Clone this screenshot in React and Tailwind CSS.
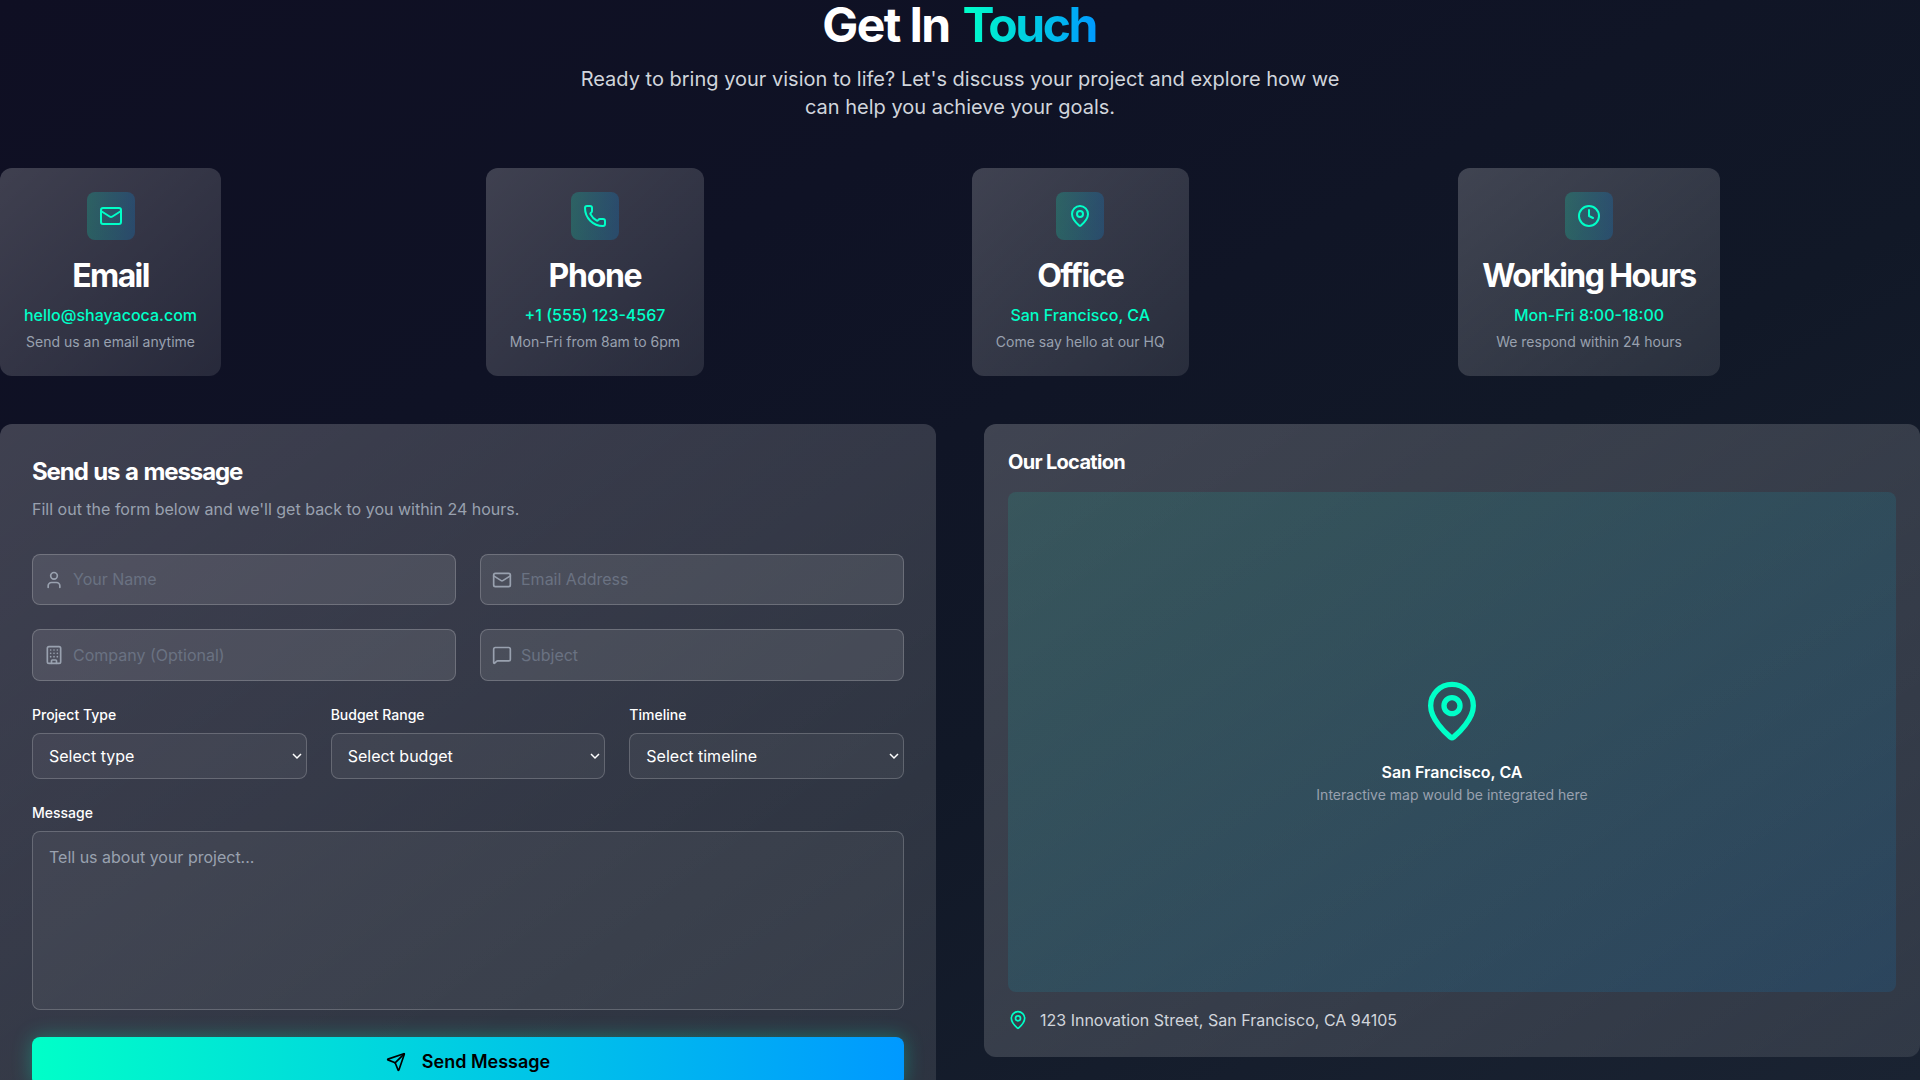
import React from 'react';
import { Mail, Phone, MapPin, Clock, User, Building, MessageSquare, Send } from 'lucide-react';

const contacts = [
  { title: 'Email', value: 'hello@shayacoca.com', note: 'Send us an email anytime', icon: Mail, width: 'w-[221px]', tracking: 'tracking-[-1.6px]' },
  { title: 'Phone', value: '+1 (555) 123-4567', note: 'Mon-Fri from 8am to 6pm', icon: Phone, width: 'w-[218px]', tracking: 'tracking-[-1.3px]' },
  { title: 'Office', value: 'San Francisco, CA', note: 'Come say hello at our HQ', icon: MapPin, width: 'w-[216.5px]', tracking: 'tracking-[-1.6px]' },
  { title: 'Working Hours', value: 'Mon-Fri 8:00-18:00', note: 'We respond within 24 hours', icon: Clock, width: 'w-[262px]', tracking: 'tracking-[-1.6px]' },
];

const glass = 'rounded-xl bg-[linear-gradient(to_bottom_right,rgba(255,255,255,0.2),rgba(255,255,255,0.1))]';

function ContactCard({ title, value, note, icon: Icon, width, tracking }) {
  return (
    <div className={`${glass} ${width} h-[208px] py-6 flex flex-col items-center whitespace-nowrap`}>
      <div className="size-12 rounded-lg flex items-center justify-center text-[#00ffc8] bg-[linear-gradient(90deg,rgba(0,255,200,0.2),rgba(0,153,255,0.2))]">
        <Icon className="size-6" />
      </div>
      <h3 className={`mt-4 text-[32px] leading-10 font-bold text-white ${tracking}`}>{title}</h3>
      <p className="mt-[7px] leading-6 font-medium text-[#00ffc8]">{value}</p>
      <p className="mt-[5px] text-sm leading-5 text-gray-400">{note}</p>
    </div>
  );
}

function Field({ icon: Icon, placeholder, height, lift }) {
  return (
    <div className={`${height} flex items-center gap-[9px] rounded-lg border border-white/20 bg-white/10 px-[11px]`}>
      <Icon className="size-5 shrink-0 text-gray-400" />
      <input
        placeholder={placeholder}
        className={`${lift} min-w-0 flex-1 bg-transparent text-base leading-6 outline-none placeholder:text-gray-500`}
      />
    </div>
  );
}

function Select({ label, value }) {
  return (
    <div>
      <div className="text-sm leading-5 font-medium text-white">{label}</div>
      <div className="mt-2 flex h-[46px] items-center justify-between rounded-lg border border-white/20 bg-white/5 pl-4 pr-1 text-white">
        <span>{value}</span>
        <svg viewBox="0 0 10 10" className="size-[10px]" fill="none" stroke="currentColor" strokeWidth="1.5">
          <path d="M1 3l4 4 4-4" />
        </svg>
      </div>
    </div>
  );
}

export default function App() {
  return (
    <div className="h-[1080px] w-[1920px] overflow-hidden bg-[linear-gradient(to_bottom_right,#0f0f23_0%,#0f1225_30%,#111827_60%,#1a2332_100%)] font-['Inter',sans-serif] text-base">
      <header className="flex h-[168px] flex-col items-center text-center">
        <h1 className="flex gap-[13px] text-[48px] leading-[49px] font-bold text-white">
          <span className="tracking-[-1.6px]">Get In</span>
          <span className="bg-[linear-gradient(90deg,#00ffc8,#0099ff)] bg-clip-text pr-0.5 tracking-[-2.5px] text-transparent">Touch</span>
        </h1>
        <p className="mt-4 w-[768px] text-xl leading-7 text-gray-300">
          Ready to bring your vision to life? Let's discuss your project and explore how we can help you achieve your goals.
        </p>
      </header>

      <section className="grid grid-cols-4 gap-6">
        {contacts.map((c) => (
          <ContactCard key={c.title} {...c} />
        ))}
      </section>

      <section className="mt-12 grid grid-cols-2 items-start gap-12">
        <div className={`${glass} h-[696px] p-8`}>
          <h2 className="text-2xl leading-8 font-bold tracking-[-1.1px] [word-spacing:1px] text-white">Send us a message</h2>
          <p className="mt-[9px] leading-6 text-gray-400">Fill out the form below and we'll get back to you within 24 hours.</p>
          <div className="mt-[33px] grid grid-cols-2 gap-6">
            <Field icon={User} placeholder="Your Name" height="h-[51px]" lift="mb-0.5" />
            <Field icon={Mail} placeholder="Email Address" height="h-[51px]" lift="mb-0.5" />
            <Field icon={Building} placeholder="Company (Optional)" height="h-[52px]" lift="mb-0" />
            <Field icon={MessageSquare} placeholder="Subject" height="h-[52px]" lift="mb-0" />
          </div>
          <div className="mt-6 grid grid-cols-3 gap-6">
            <Select label="Project Type" value="Select type" />
            <Select label="Budget Range" value="Select budget" />
            <Select label="Timeline" value="Select timeline" />
          </div>
          <div className="mt-6 text-sm leading-5 font-medium text-white">Message</div>
          <textarea
            placeholder="Tell us about your project..."
            className="mt-2 block h-[179px] w-full resize-none rounded-lg border border-white/20 bg-white/5 px-4 py-[13px] leading-6 outline-none placeholder:text-gray-400"
          />
          <button className="mt-[27px] flex h-[49px] w-full items-center justify-center gap-4 rounded-lg bg-[linear-gradient(90deg,#00ffc8,#0099ff)] text-lg font-semibold text-black shadow-[0_0_20px_rgba(0,255,200,0.3)]">
            <Send className="size-5" />
            Send Message
          </button>
        </div>

        <div className={`${glass} h-[633px] p-6`}>
          <h2 className="text-xl leading-7 font-bold tracking-[-0.7px] text-white">Our Location</h2>
          <div className="mt-4 flex h-[500px] flex-col items-center justify-center rounded-lg bg-[linear-gradient(to_bottom_right,rgba(0,255,200,0.1),rgba(0,153,255,0.12))]">
            <MapPin className="size-16 text-[#00ffc8]" />
            <p className="mt-[17px] leading-6 font-semibold text-white">San Francisco, CA</p>
            <p className="mt-px text-sm leading-5 text-gray-400">Interactive map would be integrated here</p>
          </div>
          <div className="mt-4 flex items-center gap-3 leading-6 text-gray-300">
            <MapPin className="size-5 text-[#00ffc8]" />
            123 Innovation Street, San Francisco, CA 94105
          </div>
        </div>
      </section>
    </div>
  );
}
